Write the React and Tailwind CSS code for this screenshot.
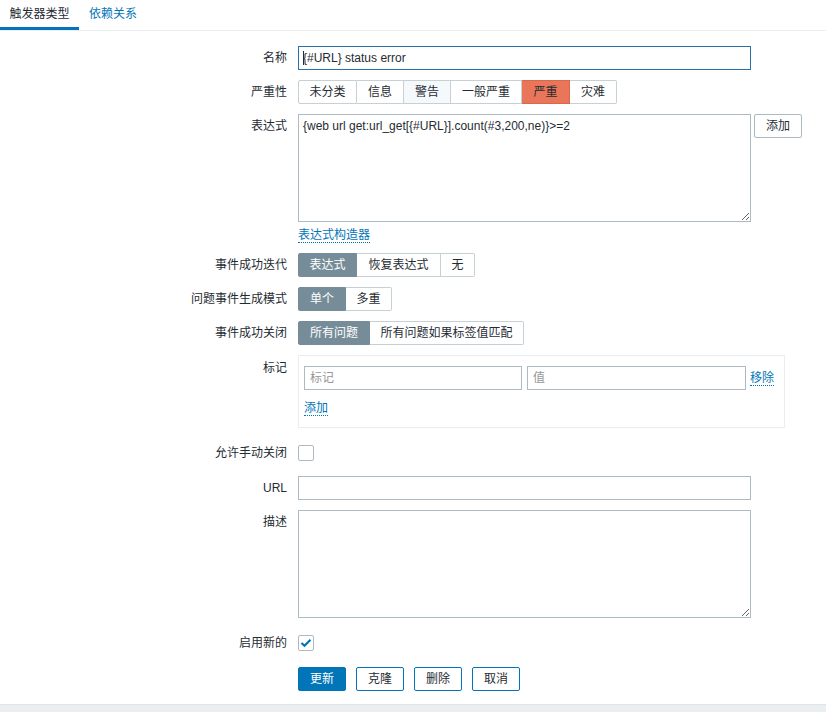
import React from "react";

const font = { fontFamily: '"Liberation Sans", Arial, "Noto Sans CJK SC", sans-serif' };

function Label({ children, top = "pt-[5px]" }) {
  return (
    <div className={`w-[298px] shrink-0 pr-[11px] text-right text-[12px] leading-[14px] text-[#1f2c33] ${top}`}>
      {children}
    </div>
  );
}

function Seg({ items }) {
  return (
    <div className="flex h-[24px]">
      {items.map((it, i) => (
        <div
          key={i}
          style={{ width: it.w }}
          className={`flex items-center justify-center text-[12px] border-y border-r ${i === 0 ? "border-l rounded-l-[2px]" : ""} ${
            i === items.length - 1 ? "rounded-r-[2px]" : ""
          } ${
            it.sel
              ? "bg-[#768d99] border-[#768d99] text-white"
              : it.red
              ? "bg-[#e97659] border-[#d9684c] text-[#1f2c33]"
              : it.hover
              ? "bg-[#f6f9fc] border-[#c6d1d6] text-[#1f2c33]"
              : "bg-white border-[#c6d1d6] text-[#1f2c33]"
          }`}
        >
          {it.t}
        </div>
      ))}
    </div>
  );
}

function Link({ children }) {
  return (
    <span className="text-[12px] text-[#0275b8] border-b border-dotted border-[#0275b8] leading-[14px]">{children}</span>
  );
}

function Check({ checked }) {
  return (
    <div className="w-[16px] h-[16px] border border-[#acbbc2] rounded-[2px] bg-white flex items-center justify-center">
      {checked && (
        <svg width="12" height="10" viewBox="0 0 12 10">
          <path d="M1.5 5 L4.5 7.8 L10.5 1.8" fill="none" stroke="#0275b8" strokeWidth="2.2" />
        </svg>
      )}
    </div>
  );
}

export default function App() {
  return (
    <div style={font} className="w-[826px] h-[712px] bg-white relative overflow-hidden text-[#1f2c33] text-[12px] leading-[14px]">
      {/* Tabs */}
      <div className="flex h-[31px] border-b border-[#ebeef0]">
        <div className="w-[79px] flex items-center justify-center text-[12px] text-[#1f2c33] border-b-[3px] border-[#0275b8] pt-[1px]">
          触发器类型
        </div>
        <div className="w-[68px] flex items-center justify-center text-[12px] text-[#0275b8] pb-[2px]">依赖关系</div>
      </div>

      <div className="flex flex-col pt-[15px]">
        {/* 名称 */}
        <div className="flex">
          <Label>名称</Label>
          <div className="w-[453px] h-[24px] border border-[#2a6fa8] flex items-center px-[4px] text-[12px]">
            <span className="border-l border-[#1f2c33] h-[14px] -mr-[1px]"></span>
            {"{#URL} status error"}
          </div>
        </div>

        {/* 严重性 */}
        <div className="flex mt-[10px]">
          <Label>严重性</Label>
          <Seg
            items={[
              { t: "未分类", w: 59 },
              { t: "信息", w: 47 },
              { t: "警告", w: 47, hover: true },
              { t: "一般严重", w: 71 },
              { t: "严重", w: 48, red: true },
              { t: "灾难", w: 47 },
            ]}
          />
        </div>

        {/* 表达式 */}
        <div className="flex mt-[10px]">
          <Label>表达式</Label>
          <div className="flex flex-col">
            <div className="flex">
              <textarea
                readOnly
                className="w-[453px] h-[108px] border border-[#acbbc2] px-[4px] py-[4px] text-[12px] leading-[14px] outline-none resize-y text-[#1f2c33]"
                value={"{web url get:url_get[{#URL}].count(#3,200,ne)}>=2"}
              />
              <div className="ml-[3px] w-[48px] h-[24px] border border-[#acbbc2] rounded-[2px] flex items-center justify-center text-[12px]">
                添加
              </div>
            </div>
            <div className="mt-[6px] flex">
              <Link>表达式构造器</Link>
            </div>
          </div>
        </div>

        {/* 事件成功迭代 */}
        <div className="flex mt-[10px]">
          <Label>事件成功迭代</Label>
          <Seg
            items={[
              { t: "表达式", w: 59, sel: true },
              { t: "恢复表达式", w: 84 },
              { t: "无", w: 34 },
            ]}
          />
        </div>

        <div className="flex mt-[10px]">
          <Label>问题事件生成模式</Label>
          <Seg
            items={[
              { t: "单个", w: 48, sel: true },
              { t: "多重", w: 46 },
            ]}
          />
        </div>

        <div className="flex mt-[10px]">
          <Label>事件成功关闭</Label>
          <Seg
            items={[
              { t: "所有问题", w: 72, sel: true },
              { t: "所有问题如果标签值匹配", w: 154 },
            ]}
          />
        </div>

        {/* 标记 */}
        <div className="flex mt-[10px]">
          <Label top="pt-[6px]">标记</Label>
          <div className="w-[487px] h-[73px] border border-[#ebeef0] px-[5px] pt-[10px]">
            <div className="flex items-center">
              <div className="w-[218px] h-[24px] border border-[#acbbc2] flex items-center px-[5px] text-[12px] text-[#969696]">标记</div>
              <div className="ml-[5px] w-[219px] h-[24px] border border-[#acbbc2] flex items-center px-[5px] text-[12px] text-[#969696]">值</div>
              <div className="ml-[4px] flex">
                <Link>移除</Link>
              </div>
            </div>
            <div className="mt-[11px] flex">
              <Link>添加</Link>
            </div>
          </div>
        </div>

        {/* 允许手动关闭 */}
        <div className="flex mt-[13px] h-[24px] items-start">
          <Label top="pt-[5px]">允许手动关闭</Label>
          <div className="pt-[4px]">
            <Check />
          </div>
        </div>

        {/* URL */}
        <div className="flex mt-[11px]">
          <Label>URL</Label>
          <div className="w-[453px] h-[24px] border border-[#acbbc2]"></div>
        </div>

        {/* 描述 */}
        <div className="flex mt-[10px]">
          <Label>描述</Label>
          <textarea readOnly className="w-[453px] h-[108px] border border-[#acbbc2] outline-none resize-y" />
        </div>

        {/* 启用新的 */}
        <div className="flex mt-[14px] h-[24px] items-start">
          <Label top="pt-[4px]">启用新的</Label>
          <div className="pt-[3px]">
            <Check checked />
          </div>
        </div>

        {/* Buttons */}
        <div className="flex mt-[11px] pl-[298px] gap-[10px]">
          <div className="w-[48px] h-[24px] bg-[#0275b8] border border-[#0275b8] rounded-[2px] text-white text-[12px] flex items-center justify-center">
            更新
          </div>
          <div className="w-[48px] h-[24px] bg-white border border-[#0275b8] rounded-[2px] text-[#1f2c33] text-[12px] flex items-center justify-center">
            克隆
          </div>
          <div className="w-[48px] h-[24px] bg-white border border-[#0275b8] rounded-[2px] text-[#1f2c33] text-[12px] flex items-center justify-center">
            删除
          </div>
          <div className="w-[48px] h-[24px] bg-white border border-[#0275b8] rounded-[2px] text-[#1f2c33] text-[12px] flex items-center justify-center">
            取消
          </div>
        </div>
      </div>

      {/* footer */}
      <div className="absolute left-0 right-0 bottom-0 h-[8px] bg-[#ebeef0] border-t border-[#dfe4e7]"></div>
    </div>
  );
}
